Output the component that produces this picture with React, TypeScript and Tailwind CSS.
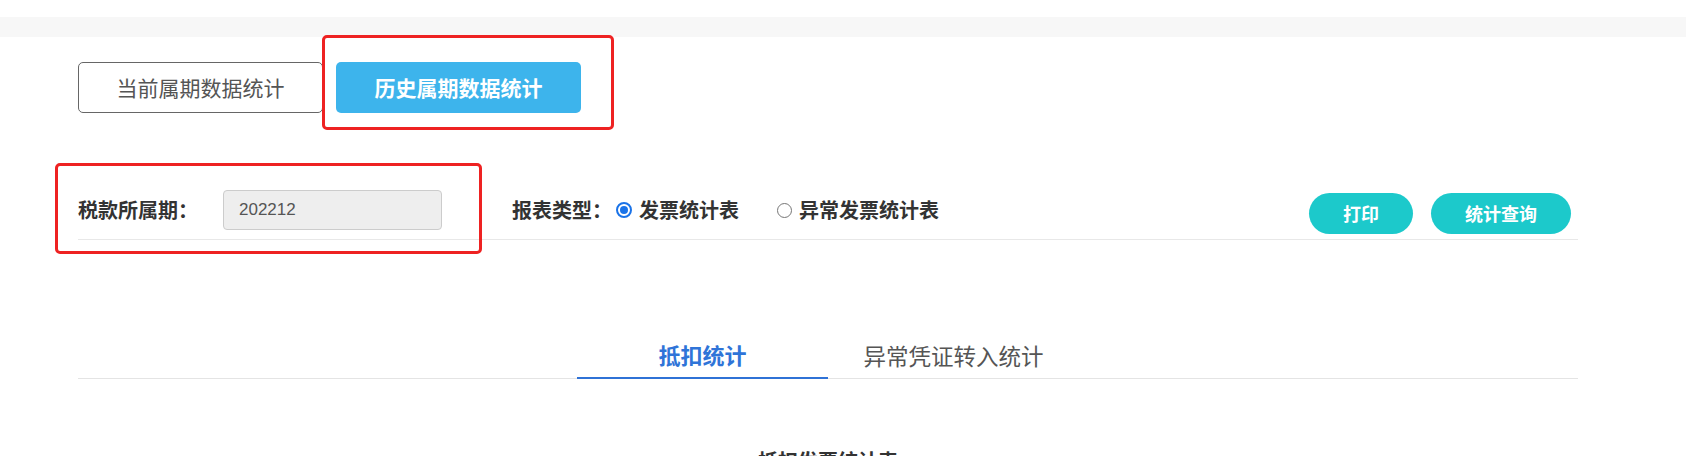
import { useState } from 'react';

const cjk = "font-['Microsoft_YaHei','Noto_Sans_CJK_SC',sans-serif]";

function Radio({ checked }: { checked: boolean }) {
  if (checked) {
    return (
      <span className="flex h-[16px] w-[16px] items-center justify-center rounded-full border-2 border-[#1a73e8] bg-white">
        <span className="h-[8px] w-[8px] rounded-full bg-[#1a73e8]" />
      </span>
    );
  }
  return <span className="h-[15px] w-[15px] rounded-full border border-[#767676] bg-white" />;
}

export default function App() {
  const [period, setPeriod] = useState<'current' | 'history'>('history');
  const [reportType, setReportType] = useState<'invoice' | 'abnormal'>('invoice');
  const [tab, setTab] = useState(0);

  return (
    <div className={`min-h-[456px] w-[1686px] overflow-hidden bg-white ${cjk}`}>
      <div className="h-[17px]" />
      <div className="h-[20px] bg-[#f7f7f7]" />

      <div className="ml-[78px] w-[1500px]">
        {/* period switch */}
        <div className="mt-[25px] flex gap-[13px]">
          <button
            onClick={() => setPeriod('current')}
            className="h-[51px] w-[245px] rounded-[5px] border border-[#666] bg-white text-[21px] text-[#555]"
          >
            当前属期数据统计
          </button>
          <div className="relative">
            <button
              onClick={() => setPeriod('history')}
              className="h-[51px] w-[245px] rounded-[5px] bg-[#3db4ec] text-[21px] font-bold text-white"
            >
              历史属期数据统计
            </button>
            <div className="pointer-events-none absolute left-[-14px] top-[-27px] h-[95px] w-[292px] rounded-[5px] border-[3px] border-[#ee2222]" />
          </div>
        </div>

        {/* filters */}
        <div className="relative mt-[68px] flex h-[59px] items-center border-b border-[#e8e8e8]">
          <span className="w-[145px] text-[20px] font-bold text-[#333]">税款所属期：</span>
          <input
            readOnly
            value="202212"
            className="h-[40px] w-[219px] rounded-[4px] border border-[#cccccc] bg-[#eeeeee] px-[15px] font-['Liberation_Sans',sans-serif] text-[17px] text-[#555] outline-none"
          />
          <span className="ml-[70px] w-[104px] text-[20px] font-bold text-[#333]">报表类型：</span>
          <label className="flex cursor-pointer items-center gap-[7px]" onClick={() => setReportType('invoice')}>
            <Radio checked={reportType === 'invoice'} />
            <span className="text-[20px] font-bold text-[#333]">发票统计表</span>
          </label>
          <label className="ml-[38px] flex cursor-pointer items-center gap-[7px]" onClick={() => setReportType('abnormal')}>
            <Radio checked={reportType === 'abnormal'} />
            <span className="text-[20px] font-bold text-[#333]">异常发票统计表</span>
          </label>
          <div className="ml-auto mr-[7px] mt-[6px] flex gap-[18px]">
            <button className="h-[41px] w-[104px] rounded-full bg-[#1cc9cb] text-[18px] font-bold text-white">打印</button>
            <button className="h-[41px] w-[140px] rounded-full bg-[#1cc9cb] text-[18px] font-bold text-white">统计查询</button>
          </div>
          <div className="pointer-events-none absolute left-[-23px] top-[-18px] h-[91px] w-[427px] rounded-[5px] border-[3px] border-[#ee2222]" />
        </div>

        {/* tabs */}
        <div className="mt-[92px] flex h-[47px] justify-center border-b border-[#e4e4e4]">
          {['抵扣统计', '异常凭证转入统计'].map((t, i) => (
            <button
              key={t}
              onClick={() => setTab(i)}
              className={
                tab === i
                  ? 'mb-[-1px] w-[251px] border-b-2 border-[#2f72d6] text-[22px] font-bold text-[#2f74d8]'
                  : 'mb-[-1px] w-[251px] text-[22.5px] text-[#555]'
              }
            >
              {t}
            </button>
          ))}
        </div>

        <div className="mt-[68px] text-center text-[20px] font-bold leading-[28px] text-[#333]">
          {tab === 0 ? '抵扣发票统计表' : '异常凭证转入统计表'}
        </div>
      </div>
    </div>
  );
}
